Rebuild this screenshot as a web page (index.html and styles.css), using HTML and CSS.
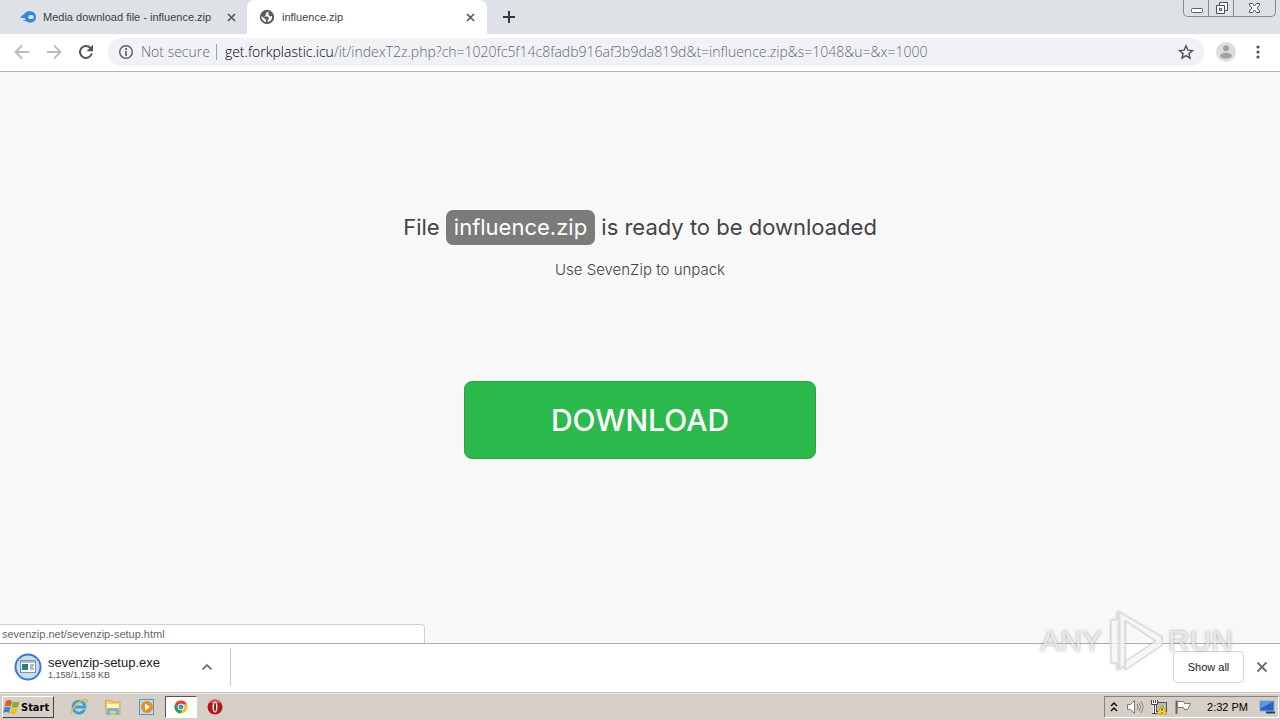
FILE: index.html
```html
<!DOCTYPE html>
<html lang="en">
<head>
<meta charset="utf-8">
<title>influence.zip</title>
<link rel="stylesheet" href="styles.css">
</head>
<body>
<header class="tabstrip">
  <div class="tab">
    <svg class="favicon" viewBox="0 0 16 16"><path d="M0 8.500C2 7 4 5 6 3.200 8 1.500 16 1.500 16 8c0 6-7 7-10 4H2.500c2-.5 3-1 3-2.500z" fill="#3585d8"/><ellipse cx="11" cy="8" rx="2.800" ry="2.100" fill="#dee1e6"/></svg>
    <span class="tab-title">Media download file - influence.zip</span>
    <button class="icon-btn" aria-label="Close tab"><svg width="9" height="9" viewBox="0 0 9 9"><path d="M1 1l7 7M8 1L1 8" stroke="#54585d" stroke-width="1.700"/></svg></button>
  </div>
  <div class="tab active">
    <svg class="favicon" viewBox="0 0 16 16"><circle cx="8" cy="8" r="7.200" fill="#5a5d61"/><path d="M9.500 2.500L7 4v2L5 7.500h4l1 2-1.500 2 .5 1.500c3-1 4.500-3 4-6l-2 .5-1.500-1.500V4zM2.500 7c-.2 3 1.500 5.500 4.500 6v-2L5.500 9.500z" fill="#fff"/></svg>
    <span class="tab-title">influence.zip</span>
    <button class="icon-btn" aria-label="Close tab"><svg width="9" height="9" viewBox="0 0 9 9"><path d="M1 1l7 7M8 1L1 8" stroke="#54585d" stroke-width="1.700"/></svg></button>
  </div>
  <button class="icon-btn new-tab" aria-label="New tab"><svg width="12" height="12" viewBox="0 0 12 12"><path d="M6 0v12M0 6h12" stroke="#33363a" stroke-width="2"/></svg></button>
  <div class="window-controls">
    <button aria-label="Minimize"><svg width="13" height="16" viewBox="0 0 13 16"><rect x="1.500" y="8.500" width="11" height="4" rx="1" fill="#fff" stroke="#5c6069"/></svg></button>
    <button aria-label="Restore"><svg width="13" height="16" viewBox="0 0 13 16"><path d="M4.500 2.500h8v8h-3v3h-8v-8h3z" fill="#fff" stroke="#4b4f58"/><path d="M4.500 5.500h5v5M4.500 8.500h2v2h-2z" fill="none" stroke="#4b4f58"/></svg></button>
    <button aria-label="Close"><svg width="13" height="16" viewBox="0 0 13 16"><path d="M1.500 3.500h3l2 2.500 2-2.500h3v1.500L9 8l2.500 3v1.500h-3l-2-2.500-2 2.500h-3V11L4 8 1.500 5z" fill="#fff" stroke="#4b4f58"/></svg></button>
  </div>
</header>
<nav class="toolbar">
  <button class="icon-btn" aria-label="Back"><svg width="16" height="16" viewBox="0 0 16 16"><path d="M15 8H2M8 1.500L1.500 8 8 14.500" fill="none" stroke="#b9bbbe" stroke-width="1.800"/></svg></button>
  <button class="icon-btn" aria-label="Forward"><svg width="16" height="16" viewBox="0 0 16 16"><path d="M1 8h13M8 1.500L14.500 8 8 14.500" fill="none" stroke="#b9bbbe" stroke-width="1.800"/></svg></button>
  <button class="icon-btn" aria-label="Reload"><svg width="16" height="16" viewBox="0 0 16 16"><path d="M13.800 9.500A6 6 0 1 1 12.500 4" fill="none" stroke="#505357" stroke-width="2"/><path d="M15 .8v6.400H8.600z" fill="#505357"/></svg></button>
  <div class="omnibox">
    <svg width="16" height="16" viewBox="0 0 16 16"><circle cx="8" cy="8" r="6.300" fill="none" stroke="#5f6368" stroke-width="1.500"/><path d="M8 7v5M8 4v2" stroke="#5f6368" stroke-width="1.700"/></svg>
    <span class="security">Not secure</span>
    <span class="url"><span class="host">get.forkplastic.icu</span>/it/indexT2z.php?ch=1020fc5f14c8fadb916af3b9da819d&amp;t=influence.zip&amp;s=1048&amp;u=&amp;x=1000</span>
    <button class="icon-btn" aria-label="Bookmark this page"><svg width="16" height="16" viewBox="0 0 16 16"><path d="M8 1.800l1.800 4.300 4.700.4-3.600 3.100 1.100 4.600L8 11.700l-4 2.500 1.100-4.600-3.600-3.100 4.700-.4z" fill="none" stroke="#505357" stroke-width="1.400"/></svg></button>
  </div>
  <div class="toolbar-end">
    <button class="icon-btn" aria-label="Profile"><svg width="20" height="20" viewBox="0 0 20 20"><circle cx="10" cy="10" r="10" fill="#dddddd"/><circle cx="10" cy="6.200" r="3" fill="#a0a2a4"/><ellipse cx="10" cy="13.700" rx="6" ry="2.900" fill="#a0a2a4"/></svg></button>
    <button class="icon-btn" aria-label="Menu"><svg width="16" height="16" viewBox="0 0 16 16"><g fill="#505357"><circle cx="8" cy="3" r="1.600"/><circle cx="8" cy="8" r="1.600"/><circle cx="8" cy="13" r="1.600"/></g></svg></button>
  </div>
</nav>
<main class="page">
  <h1 class="headline">File <span class="file-name">influence.zip</span> is ready to be downloaded</h1>
  <p class="hint">Use SevenZip to unpack</p>
  <a class="download" href="#">DOWNLOAD</a>
  <div class="status">sevenzip.net/sevenzip-setup.html</div>
</main>
<section class="shelf">
  <div class="item">
    <svg width="28" height="28" viewBox="0 0 28 28"><circle cx="14" cy="14" r="12.500" fill="#c5def6" stroke="#3977d3" stroke-width="2"/><rect x="6.500" y="7.500" width="15" height="12" fill="#fff" stroke="#8c928f"/><path d="M7 9h14" stroke="#a9bdc6" stroke-width="2"/><path d="M8 11h6v6H8z" fill="#28847e"/><path d="M11 11h3v3z" fill="#3e56a0"/><path d="M16 12h4M16 14h3M16 16h4" stroke="#697780"/></svg>
    <div class="item-text"><span class="item-name">sevenzip-setup.exe</span><span class="item-size">1,158/1,158 KB</span></div>
    <button class="icon-btn" aria-label="Download options"><svg width="12" height="8" viewBox="0 0 12 8"><path d="M1.500 6.500L6 2l4.500 4.500" fill="none" stroke="#75787c" stroke-width="1.800"/></svg></button>
  </div>
  <button class="show-all">Show all</button>
  <button class="icon-btn" aria-label="Close downloads bar"><svg width="12" height="12" viewBox="0 0 12 12"><path d="M1.500 1.500l9 9M10.500 1.500l-9 9" stroke="#6c6f73" stroke-width="1.900"/></svg></button>
  <div class="watermark">
    <span>ANY</span>
    <svg width="58" height="64" viewBox="0 0 58 64"><path d="M11 3v8H5v43h6v7l8-4V11l31 21-31 21v8L56 36v-8L13 3z" fill="#fff" fill-opacity=".75" stroke="#cfcfcf"/><path d="M13 3v58" stroke="#ddd" stroke-width="3"/></svg>
    <span>RUN</span>
  </div>
</section>
<footer class="taskbar">
  <button class="start"><svg width="18" height="16" viewBox="0 0 18 16"><path d="M3 2c2-1.500 4-1 6 0L7.500 7.500c-2-1-4-1-6 0z" fill="#e8562a"/><path d="M10 2.500c2 1 4 1 6.500 0L15 8c-2 1-4.500 1-6.500 0z" fill="#7cb52f"/><path d="M1.500 8.500c2-1 4-1 6 0L6 14c-2-1.500-4-1.500-6 0z" fill="#3e82d6"/><path d="M8.300 9c2 1 4 1 6.500 0L13 14.500c-2 1-4 1-6.200 0z" fill="#f5bd28"/></svg>Start</button>
  <div class="launchers">
    <button aria-label="Internet Explorer"><svg width="18" height="18" viewBox="0 0 18 18"><path d="M14.500 11.500A6 6 0 1 1 15 9H5" fill="none" stroke="#38a0dc" stroke-width="2.800"/><path d="M2 16C-1 13 8 3 15 1.500c3-.5 2 2 1 3.500" fill="none" stroke="#e3b93d" stroke-width="1.500"/></svg></button>
    <button aria-label="Explorer"><svg width="18" height="18" viewBox="0 0 18 18"><path d="M1.500 4V2.500H7L8 4h8v12H2z" fill="#f0d36c" stroke="#cdaa45"/><path d="M3 6h12v4H3z" fill="#fff3b8"/><path d="M3 17v-5q0-2 2-2h8q2 0 2 2v5h-3v-4H6v4z" fill="#6db6e0"/></svg></button>
    <button aria-label="Media Player"><svg width="18" height="18" viewBox="0 0 18 18"><rect x="1.500" y="1.500" width="14" height="15" fill="#bcdcf1" stroke="#5b94c6"/><circle cx="9" cy="9" r="6" fill="#f08a18"/><path d="M7 5.500l5 3.500-5 3.500z" fill="#fff"/></svg></button>
    <button class="running" aria-label="Chrome"><svg width="16" height="16" viewBox="0 0 16 16"><circle cx="8" cy="8" r="6.500" fill="#f5c32c"/><path d="M2.300 4.800A6.500 6.500 0 0 1 13.900 5.300L8 5.500 5.600 9.500z" fill="#dc4437"/><path d="M2.300 4.800A6.500 6.500 0 0 0 7.500 14.500L10.500 9.500 5.500 9.500z" fill="#259b55"/><circle cx="8" cy="8" r="3" fill="#4686e8" stroke="#fff"/></svg></button>
    <button aria-label="Opera"><svg width="18" height="18" viewBox="0 0 18 18"><circle cx="9" cy="9" r="7.500" fill="#b8141b"/><path d="M3 5a7 7 0 0 1 12 0z" fill="#e15a59"/><ellipse cx="9" cy="9" rx="2.500" ry="5.500" fill="#fff"/><ellipse cx="9" cy="9" rx="1" ry="4.500" fill="#8f1016"/></svg></button>
  </div>
  <div class="tray">
    <svg width="10" height="12" viewBox="0 0 10 12"><path d="M2 5l3-3 3 3M2 10l3-3 3 3" fill="none" stroke="#111" stroke-width="1.500"/></svg>
    <svg width="18" height="16" viewBox="0 0 18 16"><path d="M1.500 5.500h3l4-4v13l-4-4h-3z" fill="#fff" stroke="#777"/><path d="M11 5q2 3 0 6M13 3.500q3 4.500 0 9M15 2q4 6 0 12" fill="none" stroke="#888"/></svg>
    <svg width="16" height="16" viewBox="0 0 16 16"><rect x="5.500" y="3.500" width="10" height="9" fill="#b4bec4" stroke="#555"/><path d="M0 1h7v5H5v9H2V6H0z" fill="#fff"/><path d="M.5 1v4.500h6V1M3.500 6v8.500M1 14.500h5M2.500 1v3M4.500 1v3" fill="none" stroke="#444"/><path d="M11 6l5 9H6z" fill="#ffdc25" stroke="#c79b00"/><path d="M11 9v3M11 13v1" stroke="#222"/></svg>
    <svg width="18" height="16" viewBox="0 0 18 16"><path d="M2.500 15V1.500" stroke="#666" stroke-width="2"/><path d="M3.500 2.500h6l1 2h6l-3 6h-3l-1-2h-6z" fill="#fff" stroke="#777"/></svg>
    <time class="clock">2:32 PM</time>
    <svg width="16" height="14" viewBox="0 0 16 14"><rect x="1" y="1" width="14" height="10" fill="#2265c5" stroke="#90a9c8"/><path d="M1.500 1.500h13L2 8z" fill="#5d9ae5"/><path d="M7 12.500h9" stroke="#253c63" stroke-width="2"/></svg>
  </div>
</footer>
</body>
</html>
```
FILE: styles.css
```css
* { box-sizing: border-box; }
body {
  margin: 0;
  min-height: 100vh;
  display: flex;
  flex-direction: column;
  font-family: "Liberation Sans", sans-serif;
  font-size: 11px;
  color: #333;
  background: #fff;
}
button { font: inherit; color: inherit; margin: 0; padding: 0; border: 0; background: none; }
svg { display: block; flex: none; }
.icon-btn { display: flex; flex: none; }
.tabstrip { display: flex; height: 34px; background: #dee1e6; }
.tab { display: flex; align-items: center; width: 247px; padding: 0 11px 0 20px; }
.tab.active { width: 240px; padding: 0 12px; background: #fff; border-radius: 8px 8px 0 0; }
.favicon { width: 16px; height: 16px; margin-right: 7px; }
.tab-title { flex: 1; white-space: nowrap; color: #3c4043; }
.new-tab { align-self: center; margin-left: 16px; }
.window-controls {
  display: flex;
  margin-left: auto;
  margin-right: 4px;
  height: 17px;
  border: 1px solid #858a96;
  border-top: 0;
  border-radius: 0 0 5px 5px;
}
.window-controls button { display: flex; justify-content: center; width: 25px; border-right: 1px solid #858a96; }
.window-controls button:last-child { width: 41px; border-right: 0; }
.toolbar { display: flex; align-items: center; height: 38px; padding: 0 14px 2px; border-bottom: 1px solid #b1b3b5; gap: 16px; }
.toolbar-end { display: flex; align-items: center; gap: 14px; }
.omnibox {
  flex: 1;
  min-width: 0;
  display: flex;
  align-items: center;
  height: 28px;
  margin: 0 -4px 0 -2px;
  padding: 0 10px;
  border-radius: 14px;
  background: #f0f2f5;
  font-family: "Open Sans", "Noto Sans", sans-serif;
  font-size: 14px;
  font-weight: 300;
  color: #63686d;
}
.security { margin: 0 6px 0 7px; white-space: nowrap; }
.url { flex: 1; padding-left: 8px; border-left: 1px solid #9b9fa4; line-height: 16px; white-space: nowrap; }
.host { color: #000; }
.page {
  position: relative;
  flex: 1;
  display: flex;
  flex-direction: column;
  align-items: center;
  padding-top: 138px;
  background: #f8f8f8;
  font-family: Inter, "Open Sans", sans-serif;
  color: #444;
}
.headline { margin: 0; font-size: 22px; line-height: 35px; font-weight: 400; }
.file-name { display: inline-block; padding: 0 8px; border-radius: 7px; background: #7b7b7b; color: #fff; }
.hint { margin: 14px 0 100px; font-size: 15px; line-height: 22px; font-weight: 300; }
.download {
  width: 352px;
  border: 1px solid #22a841;
  border-radius: 8px;
  background: #2bba4b;
  color: #fff;
  font-size: 30px;
  font-weight: 500;
  line-height: 76px;
  text-align: center;
  text-decoration: none;
}
.status {
  position: absolute;
  left: 0;
  bottom: 0;
  width: 425px;
  padding-left: 2px;
  border: 1px solid #d0d0d0;
  border-width: 1px 1px 0 0;
  border-top-right-radius: 4px;
  background: #fff;
  font: 11px/18px "Liberation Sans", sans-serif;
  color: #666;
}
.shelf { position: relative; display: flex; align-items: center; height: 50px; padding: 0 12px 2px 0; border-top: 1px solid #aaa; border-bottom: 1px solid #c5c4c0; gap: 12px; }
.item { display: flex; align-items: center; width: 231px; height: 38px; padding: 0 17px 0 14px; border-right: 1px solid #ccc; margin-right: auto; }
.item-text { flex: 1; display: flex; flex-direction: column; margin-left: 6px; padding-top: 2px; }
.item-name { font-size: 13px; line-height: 14px; color: #222; }
.item-size { font-size: 9px; line-height: 10px; color: #555; }
.show-all { width: 71px; height: 32px; border: 1px solid #d5d7da; border-radius: 4px; background: #fff; color: #222; }
.watermark {
  position: absolute;
  right: 47px;
  bottom: 19px;
  display: flex;
  align-items: center;
  gap: 4px;
  pointer-events: none;
  color: rgb(255 255 255 / 60%);
  font: 30px/48px "Liberation Sans", sans-serif;
  text-shadow: 0 0 3px rgb(120 120 120 / 45%);
  filter: drop-shadow(0 0 1px rgb(130 130 130 / 35%));
}
.taskbar { display: flex; align-items: center; height: 27px; padding: 0 1px 0 2px; border-top: 1px solid #ebe8e1; background: #d6cfc7; }
.start {
  display: flex;
  align-items: center;
  width: 52px;
  height: 22px;
  border: 1px solid;
  border-color: #fff #444 #444 #fff;
  color: #000;
  font: bold 11px "DejaVu Sans Condensed", "DejaVu Sans", sans-serif;
}
.launchers { display: flex; margin-left: 9px; gap: 2px; }
.launchers button { display: flex; align-items: center; justify-content: center; width: 32px; height: 22px; }
.launchers .running { border: 1px solid; border-color: #555 #fff #fff #555; background: #fff; }
.tray { display: flex; align-items: center; height: 22px; margin-left: auto; padding: 0 3px 0 4px; gap: 7px; border: 1px solid; border-color: #85817b #fff #fff #85817b; color: #000; }
.clock { margin: 0 4px 0 8px; }
```
